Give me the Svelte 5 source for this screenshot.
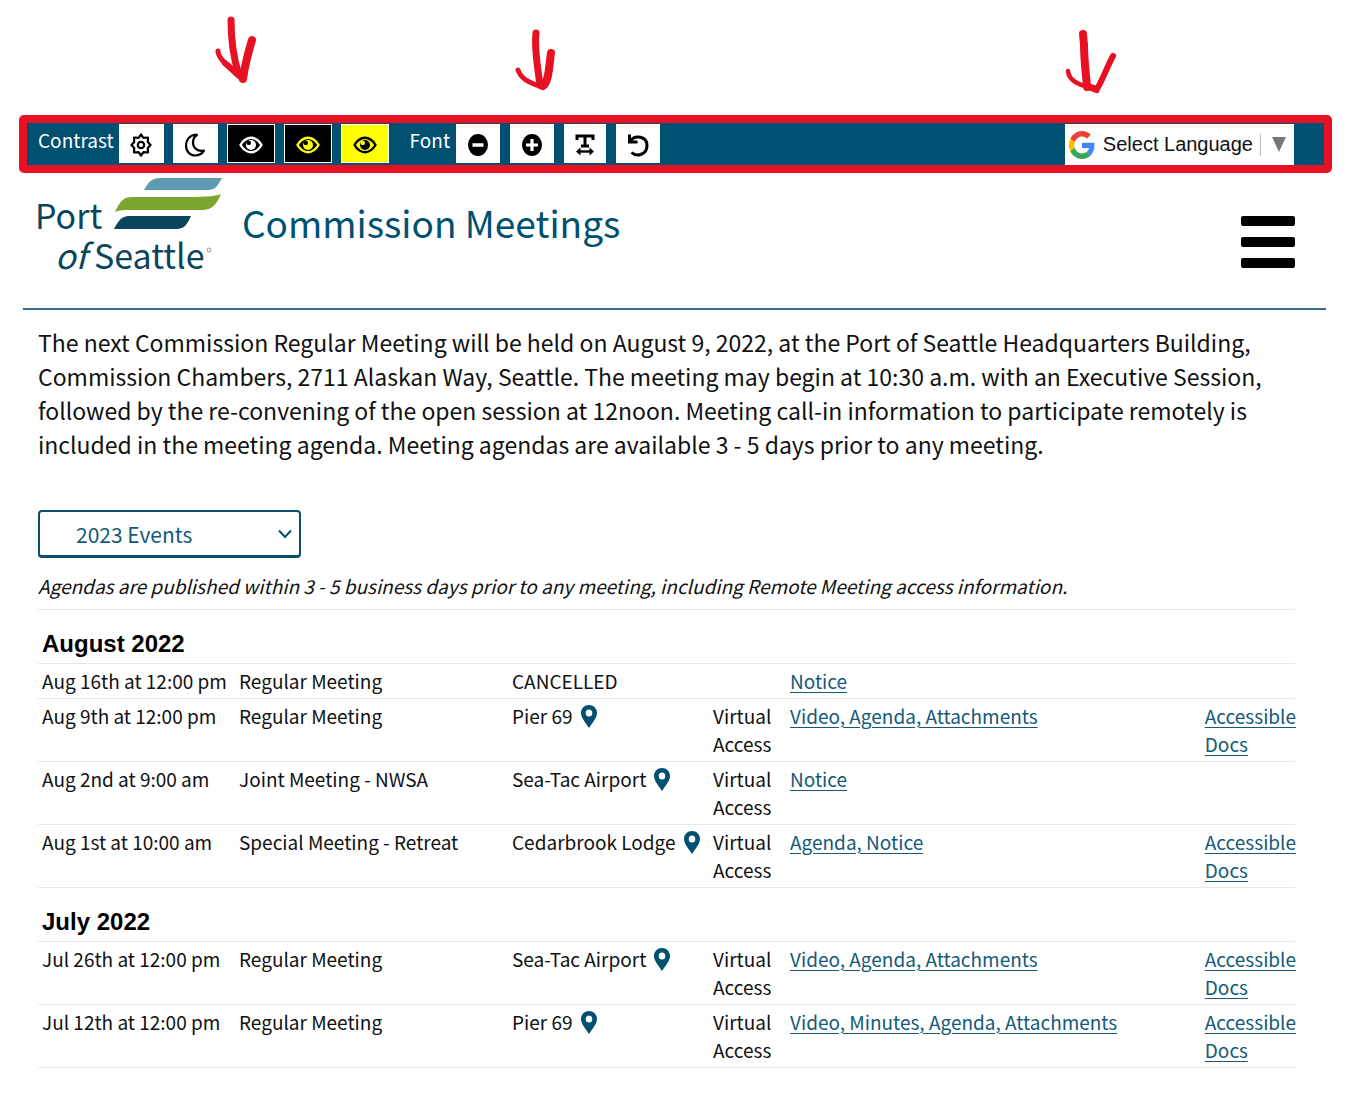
<script>
  const months = [
    {
      name: 'August 2022',
      rows: [
        { when: 'Aug 16th at 12:00 pm', what: 'Regular Meeting', where: 'CANCELLED', pin: false, virtual: false, links: 'Notice', docs: false },
        { when: 'Aug 9th at 12:00 pm', what: 'Regular Meeting', where: 'Pier 69', pin: true, virtual: true, links: 'Video, Agenda, Attachments', docs: true },
        { when: 'Aug 2nd at 9:00 am', what: 'Joint Meeting - NWSA', where: 'Sea-Tac Airport', pin: true, virtual: true, links: 'Notice', docs: false },
        { when: 'Aug 1st at 10:00 am', what: 'Special Meeting - Retreat', where: 'Cedarbrook Lodge', pin: true, virtual: true, links: 'Agenda, Notice', docs: true }
      ]
    },
    {
      name: 'July 2022',
      rows: [
        { when: 'Jul 26th at 12:00 pm', what: 'Regular Meeting', where: 'Sea-Tac Airport', pin: true, virtual: true, links: 'Video, Agenda, Attachments', docs: true },
        { when: 'Jul 12th at 12:00 pm', what: 'Regular Meeting', where: 'Pier 69', pin: true, virtual: true, links: 'Video, Minutes, Agenda, Attachments', docs: true }
      ]
    }
  ];
</script>

{#snippet eye()}
  <svg width="24" height="18" viewBox="0 0 24 18" aria-hidden="true">
    <path d="M1.500 9C4.500 4 8 1.800 12 1.800S19.500 4 22.500 9C19.500 14 16 16.200 12 16.200S4.500 14 1.500 9Z" fill="none" stroke="currentColor" stroke-width="2.400" />
    <circle cx="12" cy="9" r="5" fill="currentColor" />
    <circle cx="9.800" cy="6.900" r="2.200" fill="var(--eye-bg)" />
  </svg>
{/snippet}

<div class="page">
  <div class="marks">
    <svg class="mark one" width="44" height="70" viewBox="0 0 44 70" aria-hidden="true">
      <g fill="none" stroke="#e81123" stroke-linecap="round" stroke-linejoin="round">
        <path d="M16 5C16 24 18 42 24 60" stroke-width="7" />
        <path d="M3 36C3 44 16 54 27 64" stroke-width="5" />
        <path d="M10 48L27 63" stroke-width="6" />
        <path d="M37 25C33 38 30 50 28 64" stroke-width="8" />
      </g>
    </svg>
    <svg class="mark two" width="44" height="66" viewBox="0 0 44 66" aria-hidden="true">
      <g fill="none" stroke="#e81123" stroke-linecap="round" stroke-linejoin="round">
        <path d="M22 5C20 20 24 42 26 57" stroke-width="7" />
        <path d="M4 42C8 53 18 55 27 59" stroke-width="5" />
        <path d="M37 25C35 38 35 54 29 58" stroke-width="8" />
      </g>
    </svg>
    <svg class="mark three" width="52" height="68" viewBox="0 0 52 68" aria-hidden="true">
      <g fill="none" stroke="#e81123" stroke-linecap="round" stroke-linejoin="round">
        <path d="M18 5L19 16C19 30 21 45 22 58" stroke-width="8" />
        <path d="M3 42C4 54 18 56 32 62" stroke-width="4.500" />
        <path d="M48 27C42 38 38 50 32 60L20 56" stroke-width="6" />
      </g>
    </svg>
  </div>

  <div class="toolbar">
    <div class="group">
      <span class="label">Contrast</span>
      <button class="tool" aria-label="Light mode">
        <svg width="22" height="24" viewBox="0 0 22 24" fill="none" stroke="currentColor" stroke-width="2.200" stroke-linejoin="round" aria-hidden="true">
          <path d="M11 1.500L13.400 4.800L18 4.500L17.800 9L20.500 12L17.800 15L18 19.500L13.400 19.200L11 22.500L8.600 19.200L4 19.500L4.200 15L1.500 12L4.200 9L4 4.500L8.600 4.800Z" />
          <circle cx="11" cy="12" r="3.200" />
        </svg>
      </button>
      <button class="tool" aria-label="Dark mode">
        <svg width="22" height="24" viewBox="0 0 22 24" fill="none" stroke="currentColor" stroke-width="2.200" stroke-linejoin="round" aria-hidden="true">
          <path d="M12 1.500C5.500 2 2 7 2 12.500C2 18.500 6 22.500 11 22.500C15 22.500 18 20.800 20 17.600C13 19 9 14.500 9 9.500C9 6 10.500 3.500 13 2Z" />
        </svg>
      </button>
      <button class="tool wide dark" aria-label="White on black">{@render eye()}</button>
      <button class="tool wide dark gold" aria-label="Yellow on black">{@render eye()}</button>
      <button class="tool wide yellow" aria-label="Black on yellow">{@render eye()}</button>
    </div>
    <div class="group font">
      <span class="label">Font</span>
      <button class="tool" aria-label="Smaller text">
        <svg width="22" height="24" viewBox="0 0 22 24" aria-hidden="true">
          <ellipse cx="11" cy="12" rx="10" ry="11" fill="currentColor" />
          <path d="M5.500 12H16.500" stroke="#fff" stroke-width="3.500" />
        </svg>
      </button>
      <button class="tool" aria-label="Larger text">
        <svg width="22" height="24" viewBox="0 0 22 24" aria-hidden="true">
          <ellipse cx="11" cy="12" rx="10" ry="11" fill="currentColor" />
          <path d="M5 12H17M11 6V18" stroke="#fff" stroke-width="3.200" />
        </svg>
      </button>
      <button class="tool slim" aria-label="Text spacing">
        <svg width="20" height="24" viewBox="0 0 20 24" fill="none" stroke="currentColor" aria-hidden="true">
          <path d="M2 7V3H18V7M10 3V13M6 13H14" stroke-width="3" />
          <path d="M3 18.500H17" stroke-width="2.400" />
          <path d="M1 18.500L5.500 14.500V22.500ZM19 18.500L14.500 14.500V22.500Z" fill="currentColor" stroke="none" />
        </svg>
      </button>
      <button class="tool" aria-label="Reset text">
        <svg width="22" height="24" viewBox="0 0 22 24" fill="none" stroke="currentColor" stroke-width="3" aria-hidden="true">
          <path d="M2.500 1.500V9H10.500" />
          <path d="M3 8.500C8 1 20 3.500 20 12.500C20 21.500 10 24.500 4.500 19.500" />
        </svg>
      </button>
    </div>
    <a class="language" href="#language">
      <svg width="26" height="28" viewBox="0 0 48 48" preserveAspectRatio="none" aria-hidden="true">
        <path fill="#EA4335" d="M24 9.500c3.540 0 6.710 1.220 9.210 3.600l6.850-6.850C35.900 2.380 30.470 0 24 0 14.620 0 6.510 5.380 2.560 13.220l7.980 6.190C12.430 13.720 17.740 9.500 24 9.500z" />
        <path fill="#4285F4" d="M46.980 24.550c0-1.570-.15-3.090-.38-4.550H24v9.020h12.940c-.58 2.960-2.260 5.480-4.780 7.180l7.730 6c4.510-4.180 7.090-10.360 7.090-17.650z" />
        <path fill="#FBBC05" d="M10.530 28.590c-.48-1.450-.76-2.990-.76-4.590s.27-3.140.76-4.590l-7.980-6.190C.92 16.460 0 20.120 0 24c0 3.880.92 7.540 2.560 10.780l7.970-6.190z" />
        <path fill="#34A853" d="M24 48c6.480 0 11.930-2.130 15.890-5.810l-7.730-6c-2.150 1.450-4.920 2.300-8.160 2.300-6.260 0-11.570-4.220-13.470-9.910l-7.980 6.190C6.510 42.620 14.620 48 24 48z" />
      </svg>
      <span>Select Language</span>
      <span class="arrow"><svg width="14" height="15" viewBox="0 0 14 15" aria-hidden="true"><path d="M0 0H14L7 15Z" fill="#777" /></svg></span>
    </a>
  </div>

  <header>
    <svg class="logo" width="190" height="106" viewBox="-5 0 190 106" role="img" aria-label="Port of Seattle">
      <path d="M106 13C112 2 116 1 124 1H184C178 12 176 13 168 13H106Z" fill="#5f9bb0" />
      <path d="M77 35C84 20 88 20 97 20C150 20 174 21 183 17C177 31 172 33 162 33H96C86 33 82 33 77 35Z" fill="#7ba52d" />
      <path d="M76 52C82 40 86 39 93 39H153C148 50 145 52 137 52Z" fill="#0b455c" />
      <g class="wordmark">
        <text x="-3" y="52">Port</text>
        <text x="17" y="92" font-style="italic">of</text>
        <text x="56" y="92">Seattle</text>
      </g>
      <circle cx="171" cy="73" r="2" fill="none" stroke="#7f9ba6" />
    </svg>
    <h1>Commission Meetings</h1>
    <button class="menu" aria-label="Menu"><i></i><i></i><i></i></button>
  </header>

  <main>
    <p class="intro">
      The next Commission Regular Meeting will be held on August 9, 2022, at the Port of Seattle Headquarters Building, Commission Chambers, 2711 Alaskan Way, Seattle. The meeting may begin at 10:30 a.m. with an Executive Session, followed by the re-convening of the open session at 12noon. Meeting call-in information to participate remotely is included in the meeting agenda. Meeting agendas are available 3 - 5 days prior to any meeting.
    </p>

    <div class="picker">
      <select aria-label="Events year"><option>2023 Events</option></select>
      <svg width="14" height="10" viewBox="0 0 14 10" aria-hidden="true"><path d="M1 1.500L7 8L13 1.500" fill="none" stroke="#0b4f6c" stroke-width="2" /></svg>
    </div>

    <p class="note">Agendas are published within 3 - 5 business days prior to any meeting, including Remote Meeting access information.</p>

    <table>
      <colgroup>
        <col class="c-when" /><col class="c-what" /><col class="c-where" /><col class="c-virtual" /><col class="c-links" /><col />
      </colgroup>
      {#each months as month}
        <tbody>
          <tr><th colspan="6">{month.name}</th></tr>
          {#each month.rows as row}
            <tr>
              <td>{row.when}</td>
              <td>{row.what}</td>
              <td>
                <span class="place">{row.where}
                  {#if row.pin}
                    <svg width="16" height="23" viewBox="0 0 16 23" aria-hidden="true"><path fill-rule="evenodd" d="M8 0C3.500 0 0 3.500 0 8C0 13 5 18 8 23C11 18 16 13 16 8C16 3.500 12.500 0 8 0ZM8 4.500A3.300 3.500 0 1 1 8 11.500A3.300 3.500 0 1 1 8 4.500Z" fill="#005071" /></svg>
                  {/if}
                </span>
              </td>
              <td>{row.virtual ? 'Virtual Access' : ''}</td>
              <td><a href="#meeting">{row.links}</a></td>
              <td>{#if row.docs}<a href="#docs">Accessible Docs</a>{/if}</td>
            </tr>
          {/each}
        </tbody>
      {/each}
    </table>
  </main>
</div>

<style>
  :global(body) {
    background: #fff;
  }
  .page {
    font-family: 'Noto Sans CJK SC', 'Open Sans', sans-serif;
    color: #111;
    padding-bottom: 40px;
  }
  .marks {
    position: relative;
    height: 115px;
  }
  .mark {
    position: absolute;
  }
  .one {
    left: 215px;
    top: 15px;
  }
  .two {
    left: 514px;
    top: 28px;
  }
  .three {
    left: 1065px;
    top: 29px;
  }
  .toolbar {
    display: flex;
    margin: 0 22px 0 19px;
    height: 42px;
    border: 8px solid #e81123;
    border-radius: 5px;
    background: #005071;
    padding: 0 30px 0 11px;
  }
  .group {
    display: flex;
    gap: 9px;
    padding-top: 1px;
  }
  .group.font {
    gap: 10px;
    margin-left: 21px;
  }
  .label {
    color: #fff;
    font-size: 19px;
    line-height: 32px;
    margin-right: -4px;
  }
  .tool {
    display: flex;
    align-items: center;
    justify-content: center;
    width: 45px;
    height: 39px;
    padding: 2px 0 0;
    border: 1px solid #fff;
    background: #fff;
    color: #000;
    box-sizing: border-box;
  }
  .font .tool {
    width: 44px;
  }
  .font .slim {
    width: 42px;
  }
  .wide {
    width: 48px;
    --eye-bg: #000;
  }
  .dark {
    background: #000;
    color: #fff;
  }
  .gold {
    color: #ff0;
  }
  .yellow {
    background: #ff0;
    --eye-bg: #ff0;
  }
  .language {
    display: flex;
    align-items: center;
    gap: 8px;
    margin: 1px 0 0 auto;
    padding: 0 8px 0 4px;
    background: #fff;
    color: #111;
    font: 20px 'Liberation Sans', sans-serif;
    text-decoration: none;
  }
  .arrow {
    display: flex;
    align-items: center;
    height: 22px;
    padding-left: 11px;
    border-left: 1px solid #bbb;
    margin-left: -1px;
  }
  header {
    display: flex;
    align-items: flex-start;
    margin: 0 28px 0 23px;
    padding: 4px 31px 0 10px;
    height: 131px;
    border-bottom: 2px solid #33708c;
  }
  .logo {
    flex: none;
  }
  .wordmark {
    fill: #0b455c;
    font-size: 34px;
  }
  h1 {
    margin: 18px 0 0 19px;
    color: #005071;
    font-size: 37px;
    font-weight: 400;
    line-height: 54px;
  }
  .menu {
    display: flex;
    flex-direction: column;
    gap: 11px;
    margin: 39px 0 0 auto;
    padding: 0;
    border: 0;
    background: none;
    width: 54px;
  }
  .menu i {
    width: 54px;
    height: 10px;
    border-radius: 2px;
    background: #000;
  }
  main {
    padding: 15px 59px 0 38px;
  }
  p {
    margin: 0;
  }
  .intro {
    font-size: 23px;
    line-height: 34px;
  }
  .picker {
    position: relative;
    width: 263px;
    margin-top: 49px;
  }
  select {
    appearance: none;
    width: 100%;
    height: 48px;
    padding: 0 36px;
    border: 2px solid #0b4f6c;
    border-bottom-width: 3px;
    border-radius: 4px;
    background: #fff;
    color: #145a78;
    font-family: inherit;
    font-size: 21px;
    display: block;
  }
  .picker svg {
    position: absolute;
    right: 9px;
    top: 19px;
  }
  .note {
    margin-top: 12px;
    padding-bottom: 7px;
    font-size: 19px;
    font-style: italic;
    line-height: 32px;
    border-bottom: 1px solid #e8e8e8;
  }
  table {
    width: 100%;
    table-layout: fixed;
    border-collapse: collapse;
    font-size: 19px;
    line-height: 28px;
  }
  .c-when {
    width: 197px;
  }
  .c-what {
    width: 273px;
  }
  .c-where {
    width: 201px;
  }
  .c-virtual {
    width: 77px;
  }
  .c-links {
    width: 33%;
  }
  tr {
    border-bottom: 1px solid #e8e8e8;
  }
  td {
    padding: 3px 0 3px 4px;
    vertical-align: top;
  }
  th {
    padding: 20px 4px 5px;
    text-align: left;
    color: #000;
    font: bold 24px/28px 'Liberation Sans', sans-serif;
  }
  td a {
    color: #145a78;
    text-underline-offset: 3px;
  }
  .place {
    display: flex;
    align-items: center;
    gap: 8px;
    white-space: nowrap;
  }
</style>
